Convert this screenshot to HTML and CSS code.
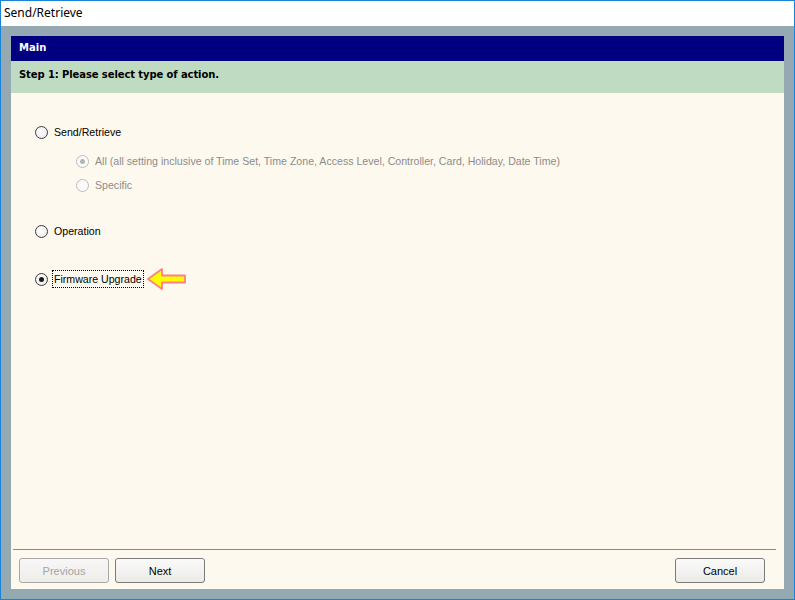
FILE: index.html
```html
<!DOCTYPE html>
<html>
<head>
<meta charset="utf-8">
<link rel="stylesheet" href="styles.css">
</head>
<body>
<div class="window">
  <div class="titlebar">Send/Retrieve</div>
  <div class="client">
    <div class="panel">
      <div class="header">Main</div>
      <div class="step">Step 1: Please select type of action.</div>
      <div class="body">
        <div class="options">
          <div class="row row-send">
            <span class="radio"></span>
            <span class="label">Send/Retrieve</span>
          </div>
          <div class="row sub row-all disabled">
            <span class="radio checked"></span>
            <span class="label">All (all setting inclusive of Time Set, Time Zone, Access Level, Controller, Card, Holiday, Date Time)</span>
          </div>
          <div class="row sub row-specific disabled">
            <span class="radio"></span>
            <span class="label">Specific</span>
          </div>
          <div class="row row-op">
            <span class="radio"></span>
            <span class="label">Operation</span>
          </div>
          <div class="row row-fw">
            <span class="radio checked"></span>
            <span class="label focus">Firmware Upgrade</span>
            <svg class="arrow" width="42" height="26" viewBox="0 0 42 26">
              <polygon points="2,13 16,3 16,9.5 39,9.5 39,16.5 16,16.5 16,23" fill="#ffff00" stroke="#ff8080" stroke-width="1.8" stroke-linejoin="round"/>
            </svg>
          </div>
        </div>
        <div class="footer">
          <div class="sep"></div>
          <div class="buttons">
            <button class="btn" disabled>Previous</button>
            <button class="btn">Next</button>
            <span class="spacer"></span>
            <button class="btn">Cancel</button>
          </div>
        </div>
      </div>
    </div>
  </div>
</div>
</body>
</html>
```

FILE: styles.css
```css
html, body {
  margin: 0;
  padding: 0;
}
body {
  width: 795px;
  height: 600px;
  overflow: hidden;
  font-family: "Liberation Sans", Arial, sans-serif;
}
.window {
  box-sizing: border-box;
  width: 795px;
  height: 600px;
  border: 1px solid #1883d7;
  display: flex;
  flex-direction: column;
  background: #95a9b3;
}
.titlebar {
  height: 25px;
  background: #ffffff;
  font-family: "Noto Sans", "Open Sans", sans-serif;
  font-size: 12px;
  line-height: 24px;
  padding-left: 3px;
  color: #000;
}
.client {
  flex: 1;
  padding: 10px;
  display: flex;
}
.panel {
  flex: 1;
  display: flex;
  flex-direction: column;
  background: #fef9ee;
}
.header {
  height: 25px;
  background: #000080;
  color: #ffffff;
  font-family: "DejaVu Sans", Verdana, sans-serif;
  font-weight: bold;
  font-size: 10px;
  line-height: 24px;
  padding-left: 8px;
}
.step {
  height: 32px;
  background: #bfdcc2;
  color: #000;
  font-family: "DejaVu Sans", Verdana, sans-serif;
  font-weight: bold;
  font-size: 10px;
  letter-spacing: -0.1px;
  line-height: 27px;
  padding-left: 8px;
}
.body {
  flex: 1;
  display: flex;
  flex-direction: column;
}
.options {
  flex: 1;
  padding-top: 31px;
}
.row {
  display: flex;
  align-items: center;
  height: 16px;
  padding-left: 24px;
  font-size: 10.6px;
  color: #000;
}
.row.sub {
  padding-left: 65px;
}
.row-all { margin-top: 13px; }
.row-specific { margin-top: 8px; }
.row-op { margin-top: 30px; }
.row-fw { margin-top: 32px; }
.radio {
  box-sizing: border-box;
  width: 13px;
  height: 13px;
  border-radius: 50%;
  border: 1px solid #3c3c3c;
  background: radial-gradient(circle at 40% 40%, #ffffff, #e6e6e6);
  margin-right: 6px;
  flex: none;
  display: flex;
  align-items: center;
  justify-content: center;
}
.radio.checked::after {
  content: "";
  width: 5px;
  height: 5px;
  border-radius: 50%;
  background: #1a1a1a;
}
.disabled .radio {
  border-color: #bcbcbc;
  background: #fbfbfb;
}
.disabled .radio.checked::after {
  background: #b4b4b4;
}
.disabled .label {
  color: #8c8c8c;
}
.label {
  line-height: 16px;
  white-space: nowrap;
}
.label.focus {
  outline: 1px dotted #000;
  outline-offset: 0;
  padding: 0 1px;
  margin-left: -1px;
}
.arrow {
  margin-left: 3px;
  flex: none;
}
.footer {
  display: flex;
  flex-direction: column;
  padding-bottom: 6px;
}
.sep {
  height: 1px;
  background: #8a8a8a;
  margin: 0 8px 0 2px;
}
.buttons {
  display: flex;
  gap: 6px;
  margin-top: 8px;
  padding: 0 19px 0 8px;
}
.spacer { flex: 1; }
.btn {
  box-sizing: border-box;
  width: 90px;
  height: 25px;
  border: 1px solid #7a7a7a;
  border-radius: 3px;
  background: linear-gradient(#fbfbfb, #ebeae6);
  font-family: "Liberation Sans", Arial, sans-serif;
  font-size: 11px;
  color: #000;
  padding: 0;
}
.btn:disabled {
  color: #a4a4a4;
  border-color: #a8a8a8;
  background: linear-gradient(#f7f7f7, #eeede9);
}
```
